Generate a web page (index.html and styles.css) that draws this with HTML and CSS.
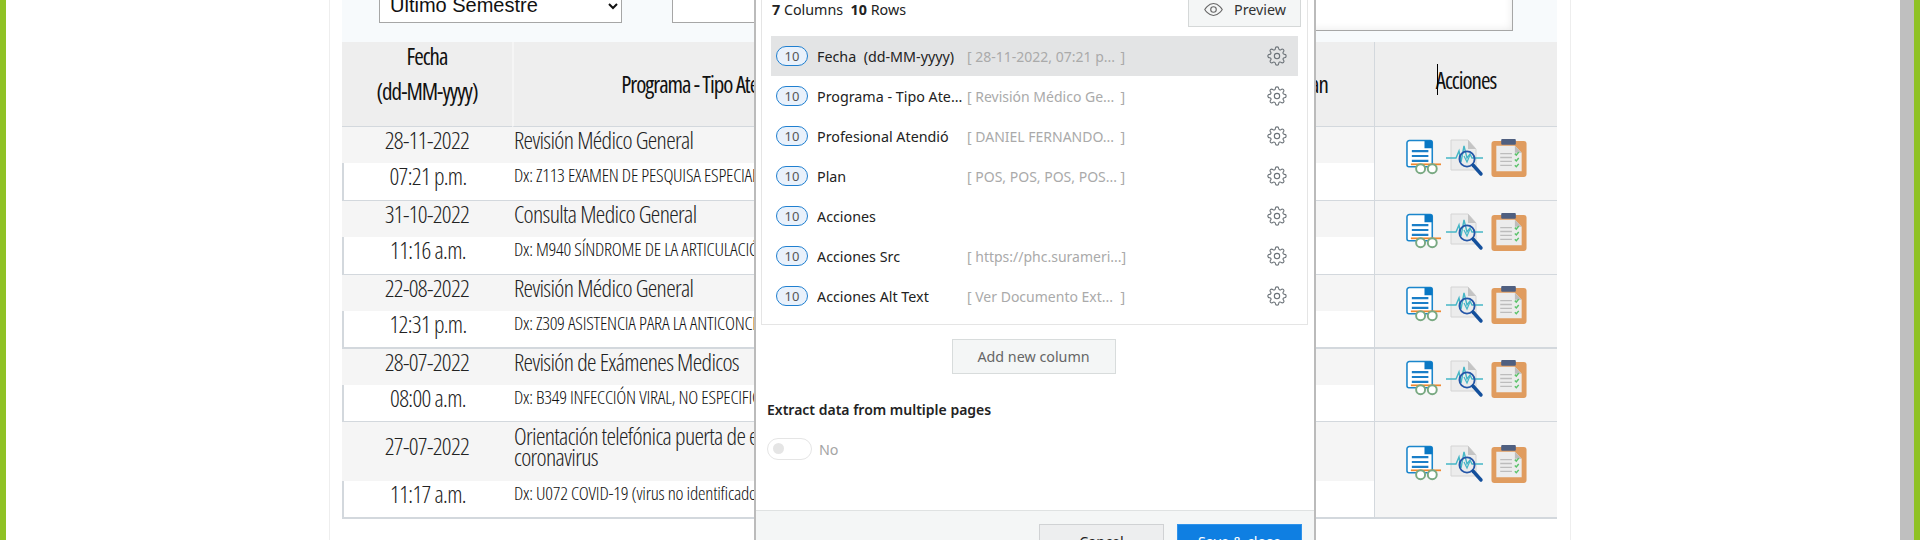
FILE: index.html
```html
<!DOCTYPE html>
<html lang="es">
<head>
<meta charset="utf-8">
<title>Historia clínica</title>
<link rel="stylesheet" href="styles.css">
</head>
<body>
<svg class="defs" width="0" height="0" aria-hidden="true">
  <symbol id="i-read" viewBox="0 0 37 38">
    <path d="M1 3.500a2.500 2.500 0 0 1 2.500-2.500H25a2 2 0 0 1 2 2v25H3A2 2 0 0 1 1 26z" fill="#fff" stroke="#1b86cc" stroke-width="1.600"/>
    <path d="M19 1h6a2 2 0 0 1 2 2v6h-8z" fill="#0a78c4"/>
    <path d="M6 12h17M6 17h17M6 22h17" stroke="#1b7fc8" stroke-width="2.200"/>
    <path d="M5 25.500h31" stroke="#f0872e" stroke-width="1.800"/>
    <circle cx="15" cy="30" r="4.600" fill="#fff" stroke="#79a982" stroke-width="2"/>
    <circle cx="27" cy="30" r="4.600" fill="#fff" stroke="#79a982" stroke-width="2"/>
  </symbol>
  <symbol id="i-scan" viewBox="0 0 38 38">
    <path d="M5 1h17l8 9v21H5z" fill="#ececec" stroke="#d4d4d4"/>
    <path d="M22 1l8 9h-8z" fill="#c4c4c4"/>
    <path d="M0 19h10l3-7 2 11 3-16 3 12 3-4 2 4h11" fill="none" stroke="#45b6c6" stroke-width="1.400"/>
    <circle cx="21" cy="20" r="7.600" fill="none" stroke="#2456a8" stroke-width="1.800"/>
    <path d="M18 17l3 6 3-7" fill="none" stroke="#45b6c6" stroke-width="1.200"/>
    <path d="M27 26l8 9" stroke="#14509c" stroke-width="3.400" stroke-linecap="round"/>
  </symbol>
  <symbol id="i-clip" viewBox="0 0 36 39">
    <rect x="0" y="2" width="36" height="37" rx="3" fill="#e09c5f"/>
    <path d="M5 7h19l7 7v19H5z" fill="#ececec"/>
    <path d="M24 7l7 7h-7z" fill="#bdbdbd"/>
    <rect x="10" y="0" width="15" height="6" rx="1" fill="#4f5f80"/>
    <path d="M9 15h12M9 19h12M9 23h12M9 27h12" stroke="#bcbcbc" stroke-width="1.400"/>
    <path d="M24 15l1.500 1.500 2.500-3M24 21l1.500 1.500 2.500-3M24 27l1.500 1.500 2.500-3" fill="none" stroke="#5cc36c" stroke-width="1.500"/>
  </symbol>
  <symbol id="i-gear" viewBox="0 0 24 24">
    <circle cx="12" cy="12" r="3.200" fill="none" stroke="currentColor" stroke-width="1.300"/>
    <path fill="none" stroke="currentColor" stroke-width="1.300" d="M19.400 15a1.650 1.650 0 0 0 .33 1.820l.06.06a2 2 0 0 1 0 2.830 2 2 0 0 1-2.830 0l-.06-.06a1.650 1.650 0 0 0-1.820-.33 1.650 1.650 0 0 0-1 1.510V21a2 2 0 0 1-2 2 2 2 0 0 1-2-2v-.09A1.650 1.650 0 0 0 9 19.400a1.650 1.650 0 0 0-1.820.33l-.06.06a2 2 0 0 1-2.830 0 2 2 0 0 1 0-2.830l.06-.06a1.650 1.650 0 0 0 .33-1.820 1.650 1.650 0 0 0-1.510-1H3a2 2 0 0 1-2-2 2 2 0 0 1 2-2h.09A1.650 1.650 0 0 0 4.600 9a1.650 1.650 0 0 0-.33-1.820l-.06-.06a2 2 0 0 1 0-2.830 2 2 0 0 1 2.830 0l.06.06a1.650 1.650 0 0 0 1.820.33H9a1.650 1.650 0 0 0 1-1.510V3a2 2 0 0 1 2-2 2 2 0 0 1 2 2v.09a1.650 1.650 0 0 0 1 1.510 1.650 1.650 0 0 0 1.820-.33l.06-.06a2 2 0 0 1 2.830 0 2 2 0 0 1 0 2.830l-.06.06a1.650 1.650 0 0 0-.33 1.820V9a1.650 1.650 0 0 0 1.510 1H21a2 2 0 0 1 2 2 2 2 0 0 1-2 2h-.09a1.650 1.650 0 0 0-1.510 1z"/>
  </symbol>
</svg>

<div class="shell">
  <div class="edge"></div>
  <main class="main">
    <div class="sheet">
      <div class="filters">
        <select class="period"><option>Último Semestre</option></select>
        <textarea class="search"></textarea>
        <textarea class="search-end"></textarea>
      </div>
      <table class="grid">
        <colgroup><col class="c1"><col class="c2"><col class="c3"><col class="c4"><col class="c5"></colgroup>
        <thead>
          <tr>
            <th class="th-date"><div class="th-lines">Fecha<br>(dd-MM-yyyy)</div></th>
            <th>Programa - Tipo Atención</th>
            <th>Profesional Atendió</th>
            <th>Plan</th>
            <th class="th-act"><span class="caret-wrap"><span class="caret"></span>Acciones</span></th>
          </tr>
        </thead>
        <tbody>
          <tr class="top"><td class="date">28-11-2022</td><td>Revisión Médico General</td><td></td><td></td>
            <td class="act" rowspan="2"><span class="icons"><svg class="i1"><use href="#i-read"/></svg><svg class="i2"><use href="#i-scan"/></svg><svg class="i3"><use href="#i-clip"/></svg></span></td></tr>
          <tr class="sub"><td class="date">07:21 p.m.</td><td class="dx">Dx: Z113 EXAMEN DE PESQUISA ESPECIAL PARA INFECCIONES</td><td></td><td></td></tr>

          <tr class="top"><td class="date">31-10-2022</td><td>Consulta Medico General</td><td></td><td></td>
            <td class="act" rowspan="2"><span class="icons"><svg class="i1"><use href="#i-read"/></svg><svg class="i2"><use href="#i-scan"/></svg><svg class="i3"><use href="#i-clip"/></svg></span></td></tr>
          <tr class="sub"><td class="date">11:16 a.m.</td><td class="dx">Dx: M940 SÍNDROME DE LA ARTICULACIÓN CONDROCOSTAL</td><td></td><td></td></tr>

          <tr class="top"><td class="date">22-08-2022</td><td>Revisión Médico General</td><td></td><td></td>
            <td class="act thick" rowspan="2"><span class="icons"><svg class="i1"><use href="#i-read"/></svg><svg class="i2"><use href="#i-scan"/></svg><svg class="i3"><use href="#i-clip"/></svg></span></td></tr>
          <tr class="sub thick"><td class="date">12:31 p.m.</td><td class="dx">Dx: Z309 ASISTENCIA PARA LA ANTICONCEPCIÓN, NO ESPECIFICADA</td><td></td><td></td></tr>

          <tr class="top"><td class="date">28-07-2022</td><td>Revisión de Exámenes Medicos</td><td></td><td></td>
            <td class="act" rowspan="2"><span class="icons"><svg class="i1"><use href="#i-read"/></svg><svg class="i2"><use href="#i-scan"/></svg><svg class="i3"><use href="#i-clip"/></svg></span></td></tr>
          <tr class="sub short"><td class="date">08:00 a.m.</td><td class="dx">Dx: B349 INFECCIÓN VIRAL, NO ESPECIFICADA</td><td></td><td></td></tr>

          <tr class="top tall"><td class="date">27-07-2022</td><td>Orientación telefónica puerta de entrada sospecha de<br>coronavirus</td><td></td><td></td>
            <td class="act thick" rowspan="2"><span class="icons"><svg class="i1"><use href="#i-read"/></svg><svg class="i2"><use href="#i-scan"/></svg><svg class="i3"><use href="#i-clip"/></svg></span></td></tr>
          <tr class="sub thick"><td class="date">11:17 a.m.</td><td class="dx">Dx: U072 COVID-19 (virus no identificado)</td><td></td><td></td></tr>
        </tbody>
      </table>
    </div>
  </main>
  <div class="rail"></div>
  <div class="edge"></div>
</div>

<section class="modal">
  <div class="fields">
    <div class="fields-head">
      <span class="counts"><b>7</b> Columns&nbsp; <b>10</b> Rows</span>
      <button class="preview" type="button">
        <svg class="eye" viewBox="0 0 24 24"><path d="M1 12s4-7.500 11-7.500S23 12 23 12s-4 7.500-11 7.500S1 12 1 12z" fill="none" stroke="currentColor" stroke-width="1.400"/><circle cx="12" cy="12" r="3.500" fill="none" stroke="currentColor" stroke-width="1.400"/></svg>
        Preview
      </button>
    </div>
    <ul class="cols">
      <li class="col on"><span class="pill">10</span><span class="name">Fecha&nbsp; (dd-MM-yyyy)</span><span class="val"><span>[ 28-11-2022, 07:21 p...</span><span>]</span></span><svg class="gear"><use href="#i-gear"/></svg></li>
      <li class="col"><span class="pill">10</span><span class="name">Programa - Tipo Ate...</span><span class="val"><span>[ Revisión Médico Ge...</span><span>]</span></span><svg class="gear"><use href="#i-gear"/></svg></li>
      <li class="col"><span class="pill">10</span><span class="name">Profesional Atendió</span><span class="val"><span>[ DANIEL FERNANDO...</span><span>]</span></span><svg class="gear"><use href="#i-gear"/></svg></li>
      <li class="col"><span class="pill">10</span><span class="name">Plan</span><span class="val"><span>[ POS, POS, POS, POS...</span><span>]</span></span><svg class="gear"><use href="#i-gear"/></svg></li>
      <li class="col"><span class="pill">10</span><span class="name">Acciones</span><span class="val"></span><svg class="gear"><use href="#i-gear"/></svg></li>
      <li class="col"><span class="pill">10</span><span class="name">Acciones Src</span><span class="val"><span>[ https://phc.surameri...</span><span>]</span></span><svg class="gear"><use href="#i-gear"/></svg></li>
      <li class="col"><span class="pill">10</span><span class="name">Acciones Alt Text</span><span class="val"><span>[ Ver Documento Ext...</span><span>]</span></span><svg class="gear"><use href="#i-gear"/></svg></li>
    </ul>
  </div>
  <div class="add-row"><button class="add" type="button">Add new column</button></div>
  <div class="multi">
    <h3 class="multi-title">Extract data from multiple pages</h3>
    <div class="toggle-row"><span class="toggle"><span class="knob"></span></span><span class="toggle-label">No</span></div>
  </div>
  <footer class="foot">
    <button class="btn" type="button">Cancel</button>
    <button class="btn primary" type="button">Save &amp; close</button>
  </footer>
</section>
</body>
</html>
```

FILE: styles.css
```css
* { box-sizing: border-box; }
html, body { margin: 0; height: 540px; overflow: hidden; background: #fff; }
body { position: relative; font-family: "Open Sans", sans-serif; color: #222; }
.defs { position: absolute; }

.shell { display: flex; height: 540px; }
.edge { width: 6px; flex: none; background: #8fc225; }
.rail { width: 14px; flex: none; background: #bfbfbf; }
.main { flex: 1; padding-left: 323px; padding-right: 329px; background: #fff; }

.sheet { height: 540px; border-left: 1px solid #eee; border-right: 1px solid #eee; padding: 0 13px 0 12px; }
.filters { height: 42px; background: #f7fafc; display: flex; align-items: flex-start; padding-left: 37px; }
.period { width: 243px; height: 34px; margin-top: -11px; padding: 0 0 3px 6px; flex: none; font-family: "Liberation Sans", sans-serif; font-size: 20px; background: #fff; border: 1px solid #a6a6a6; border-radius: 0; color: #111; }
.search { width: 400px; height: 34px; margin: -11px 0 0 50px; flex: none; resize: none; background: #fff; border: 1px solid #a6a6a6; }
.search-end { width: 441px; height: 42px; margin-top: -11px; flex: none; resize: none; background: #fff; border: 1px solid #a6a6a6; box-shadow: inset -6px -6px 8px -6px #e8e8e8; }

.grid { width: 1215px; table-layout: fixed; border-collapse: separate; border-spacing: 0; font-family: "Open Sans", sans-serif; font-stretch: 75%; font-weight: 300; color: #222; }
.c1 { width: 170px; } .c2 { width: 392px; } .c3 { width: 345px; } .c4 { width: 125px; } .c5 { width: 183px; }
.grid th { height: 85px; padding: 0; background: #eee; border-bottom: 1px solid #d3d8dd; border-left: 2px solid #f5f5f5; font-size: 23px; letter-spacing: -1px; font-weight: 400; line-height: 35px; color: #111; text-align: center; }
.grid th:first-child { border-left: 0; }
.grid th.th-date { vertical-align: top; }
.th-lines { margin-top: -3px; }
.grid th.th-act { padding-bottom: 8px; border-left: 1px solid #d3d8dd; }
.caret-wrap { position: relative; display: inline-block; }
.caret { position: absolute; left: 1px; top: 1px; width: 1px; height: 31px; background: #000; }

.grid td { padding: 0 0 12px 2px; vertical-align: middle; font-size: 24px; letter-spacing: -0.65px; line-height: 21px; white-space: nowrap; overflow: hidden; }
.grid td:first-child { padding-left: 0; }
.grid td.date { text-align: center; }
.top td { height: 36px; background: #f5f5f5; }
.top.tall td { height: 59px; }
.sub td { height: 38px; background: #fff; border-bottom: 1px solid #d3d8dd; }
.sub.short td { height: 37px; }
.sub.thick td { border-bottom-width: 2px; }
.sub td:first-child { border-left: 2px solid #d3d8dd; }
.grid td.dx { font-size: 19px; letter-spacing: -0.25px; color: #111; }
.grid td.act { background: #f5f5f5; border-bottom: 1px solid #d3d8dd; border-left: 1px solid #d3d8dd; text-align: center; padding: 0 0 12px; }
.grid td.act.thick { border-bottom-width: 2px; }
.icons { display: inline-flex; gap: 4px; align-items: center; vertical-align: middle; }
.icons svg { display: block; height: 38px; }
.i1 { width: 36px; } .i2 { width: 38px; } .i3 { width: 36px; margin-left: 3px; }

.modal { position: absolute; left: 754px; top: -40px; width: 562px; height: 640px; background: #fff; border-left: 2px solid #bbb; border-right: 2px solid #bbb; display: flex; flex-direction: column; font-family: "Noto Sans", sans-serif; font-size: 14.300px; color: #222; }
.fields { margin: 0 6px 0 5px; height: 365px; border: 1px solid #e5e5e5; border-top: 0; padding: 0 9px; flex: none; }
.fields-head { height: 76px; display: flex; align-items: flex-end; justify-content: space-between; padding: 0 0 9px 1px; }
.counts { line-height: 18px; margin-bottom: 8px; }
.counts b { font-weight: 700; }
.preview { width: 113px; height: 35px; display: flex; align-items: center; gap: 11px; padding: 0 0 0 15px; background: #f4f6f6; border: 1px solid #d5d8d8; color: #333; font: 14.300px "Noto Sans", sans-serif; margin-right: -3px; }
.eye { width: 19px; height: 19px; color: #666; flex: none; }
.cols { margin: 0; padding: 0; list-style: none; }
.col { display: flex; align-items: center; height: 40px; padding-left: 5px; }
.col.on { background: #e3e4e5; }
.pill { width: 32px; height: 20px; flex: none; border: 1px solid #1f7fd0; border-radius: 10px; background: #e9f1fb; color: #555; font-size: 13px; line-height: 18px; text-align: center; }
.name { width: 150px; margin-left: 9px; flex: none; white-space: nowrap; overflow: hidden; color: #222; }
.val { width: 158px; margin-right: 142px; flex: none; display: flex; justify-content: space-between; font-size: 14px; color: #aaa; white-space: nowrap; }
.gear { width: 20px; height: 20px; flex: none; color: #6a7177; }
.add-row { margin-top: 14px; display: flex; justify-content: center; flex: none; }
.add { width: 164px; height: 35px; margin-left: -3px; background: #f4f6f6; border: 1px solid #d8dcdc; color: #666; font: 14.300px "Noto Sans", sans-serif; }
.multi { padding: 27px 0 0 11px; flex: 1; }
.multi-title { margin: 0; font-size: 14px; line-height: 18px; font-weight: 600; color: #222; }
.toggle-row { margin-top: 19px; display: flex; align-items: center; gap: 7px; }
.toggle { width: 45px; height: 22px; flex: none; border: 1px solid #e5e5e5; border-radius: 11px; padding: 4px 0 0 5px; background: #fff; }
.knob { display: block; width: 11px; height: 11px; border-radius: 50%; background: #e5e5e5; }
.toggle-label { color: #a5a5a5; font-size: 14.300px; }
.foot { height: 90px; flex: none; background: #f4f6f6; border-top: 1px solid #dfe2e2; display: flex; justify-content: flex-end; gap: 13px; padding: 13px 12px 0 0; }
.btn { width: 125px; height: 34px; background: #edeeef; border: 1px solid #d0d2d4; color: #222; font: 14.300px "Noto Sans", sans-serif; }
.btn.primary { background: #0f7fe2; border-color: #2f93ea; color: #fff; }
```
